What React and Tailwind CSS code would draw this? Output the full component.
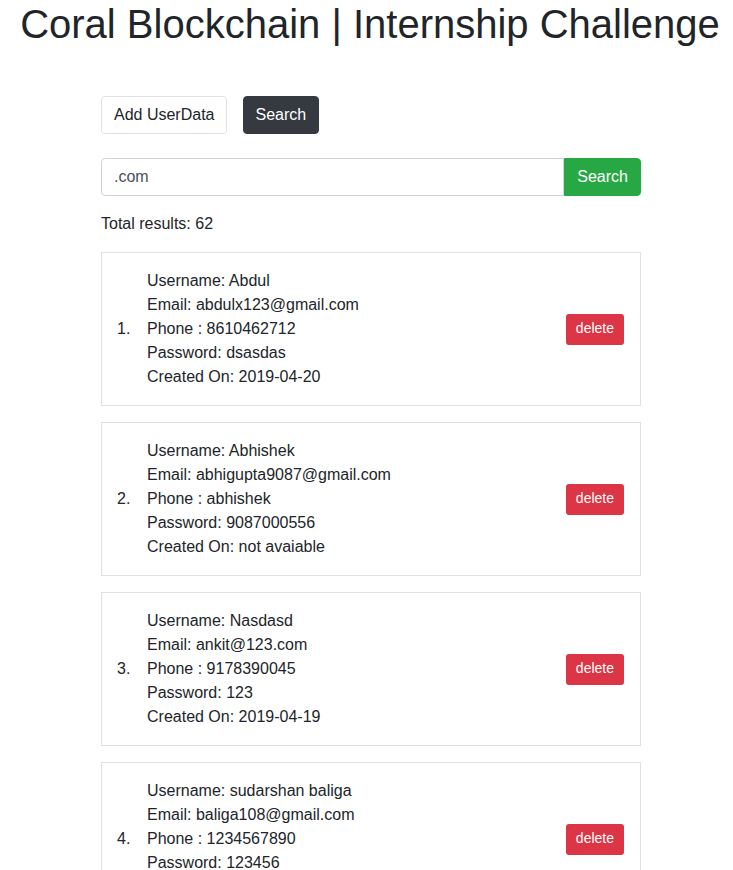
import React from 'react'

const users = [
  { username: 'Abdul', email: 'abdulx123@gmail.com', phone: '8610462712', password: 'dsasdas', created: '2019-04-20' },
  { username: 'Abhishek', email: 'abhigupta9087@gmail.com', phone: 'abhishek', password: '9087000556', created: 'not avaiable' },
  { username: 'Nasdasd', email: 'ankit@123.com', phone: '9178390045', password: '123', created: '2019-04-19' },
  { username: 'sudarshan baliga', email: 'baliga108@gmail.com', phone: '1234567890', password: '123456', created: '2019-04-19' },
]

function UserCard({ user, index }) {
  return (
    <li className="flex items-center border border-[#dfdfdf] py-4 pl-[15px] pr-4 mb-4">
      <span className="w-[30px] shrink-0">{index + 1}.</span>
      <div className="flex-1">
        <div>Username: {user.username}</div>
        <div>Email: {user.email}</div>
        <div>Phone : {user.phone}</div>
        <div>Password: {user.password}</div>
        <div>Created On: {user.created}</div>
      </div>
      <button className="bg-[#dc3545] text-white text-sm leading-[21px] px-[10px] pt-[4px] pb-[6px] rounded-[3px]">
        delete
      </button>
    </li>
  )
}

export default function App() {
  return (
    <div className="min-h-screen bg-white text-[#212529] text-base leading-6" style={{ fontFamily: '"Liberation Sans", Arial, sans-serif' }}>
      <h1 className="text-[40px] leading-[48px] text-center pl-[7px]">
        Coral Blockchain | Internship Challenge
      </h1>
      <div className="ml-[101px] w-[540px] mt-12">
        <div className="flex gap-4">
          <button className="bg-white border border-[#dee2e6] rounded pl-3 pr-[11px] h-[38px]">Add UserData</button>
          <button className="bg-[#343a40] text-white border border-[#343a40] rounded px-3 h-[38px]">Search</button>
        </div>
        <div className="flex mt-[24px]">
          <input
            readOnly
            value=".com"
            className="flex-1 h-[38px] border border-[#ced4da] rounded-l px-3 text-[#495057] outline-none"
          />
          <button className="bg-[#28a745] text-white border border-[#28a745] rounded-r px-3 h-[38px]">Search</button>
        </div>
        <p className="mt-4 mb-4">Total results: 62</p>
        <ol>
          {users.map((u, i) => (
            <UserCard key={i} user={u} index={i} />
          ))}
        </ol>
      </div>
    </div>
  )
}
